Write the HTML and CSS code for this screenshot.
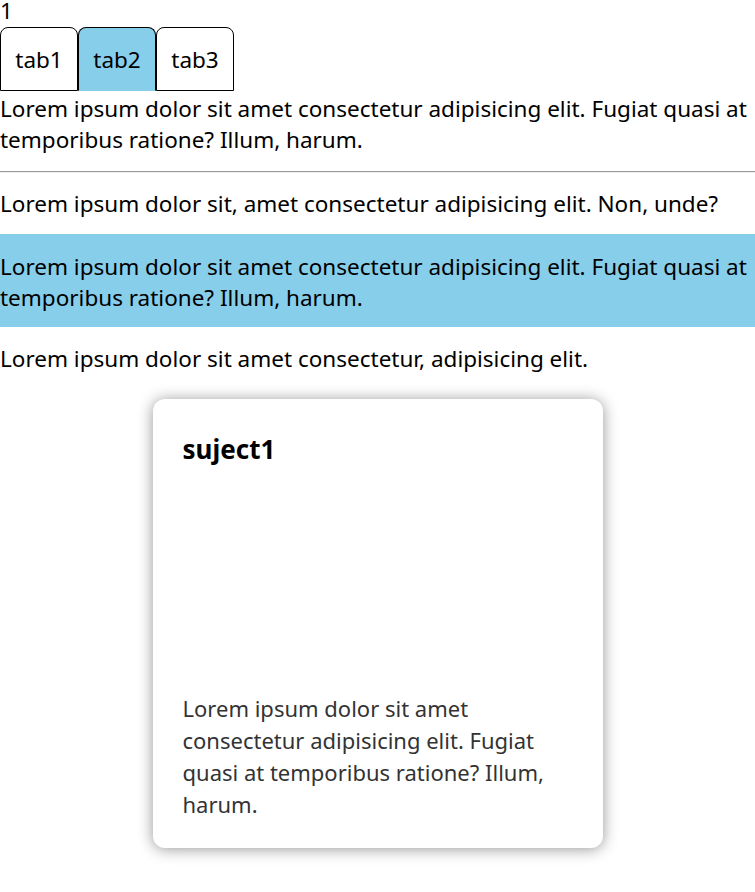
FILE: index.html
```html
<!DOCTYPE html>
<html lang="en">
<head>
<meta charset="utf-8">
<title>Tabs</title>
<link rel="stylesheet" href="styles.css">
</head>
<body>
<div class="counter">1</div>
<div class="tabs">
  <button class="tab">tab1</button>
  <button class="tab active">tab2</button>
  <button class="tab">tab3</button>
</div>
<p class="text first">Lorem ipsum dolor sit amet consectetur adipisicing elit. Fugiat quasi at temporibus ratione? Illum, harum.</p>
<hr class="rule">
<p class="text">Lorem ipsum dolor sit, amet consectetur adipisicing elit. Non, unde?</p>
<p class="text highlight">Lorem ipsum dolor sit amet consectetur adipisicing elit. Fugiat quasi at temporibus ratione? Illum, harum.</p>
<p class="text last">Lorem ipsum dolor sit amet consectetur, adipisicing elit.</p>
<div class="card">
  <h2 class="card-title">suject1</h2>
  <p class="card-body">Lorem ipsum dolor sit amet consectetur adipisicing elit. Fugiat quasi at temporibus ratione? Illum, harum.</p>
</div>
</body>
</html>
```
FILE: styles.css
```css
html, body {
  margin: 0;
  padding: 0;
  background: #fff;
}
body {
  font-family: "Noto Sans", "Open Sans", sans-serif;
  font-size: 22.5px;
  color: #000;
  padding-bottom: 40px;
}
.counter {
  height: 27px;
  line-height: 22.5px;
}
.tabs {
  display: flex;
}
.tab {
  box-sizing: border-box;
  width: 78px;
  height: 64px;
  font: inherit;
  color: #000;
  background: #fff;
  border: 1px solid #000;
  border-radius: 8px 8px 0 0;
  padding: 0;
  margin: 0;
  display: flex;
  align-items: center;
  justify-content: center;
}
.tab.active {
  background: #87ceeb;
  border-bottom-color: #87ceeb;
}
.text {
  margin: 0;
  line-height: 31px;
  padding-top: 2px;
}
.rule {
  margin: 16px 0 13px;
  border: 0;
  border-top: 1px solid #9a9a9a;
  border-bottom: 1px solid #eee;
  height: 0;
}
.highlight {
  background: #87ceeb;
  margin-top: 15px;
  padding-top: 17px;
  padding-bottom: 14px;
}
.last {
  margin-top: 14px;
}
.card {
  box-sizing: border-box;
  width: 450px;
  height: 449px;
  margin: 25px auto 0;
  padding: 30px 30px 28px;
  border-radius: 12px;
  background: #fff;
  box-shadow: 0 1px 15px rgba(0, 0, 0, 0.42);
  display: flex;
  flex-direction: column;
  justify-content: space-between;
}
.card-title {
  margin: 0;
  font-size: 26px;
  font-weight: 700;
  line-height: 40px;
}
.card-body {
  margin: 0;
  font-size: 22px;
  line-height: 32px;
  color: #333;
}
```
